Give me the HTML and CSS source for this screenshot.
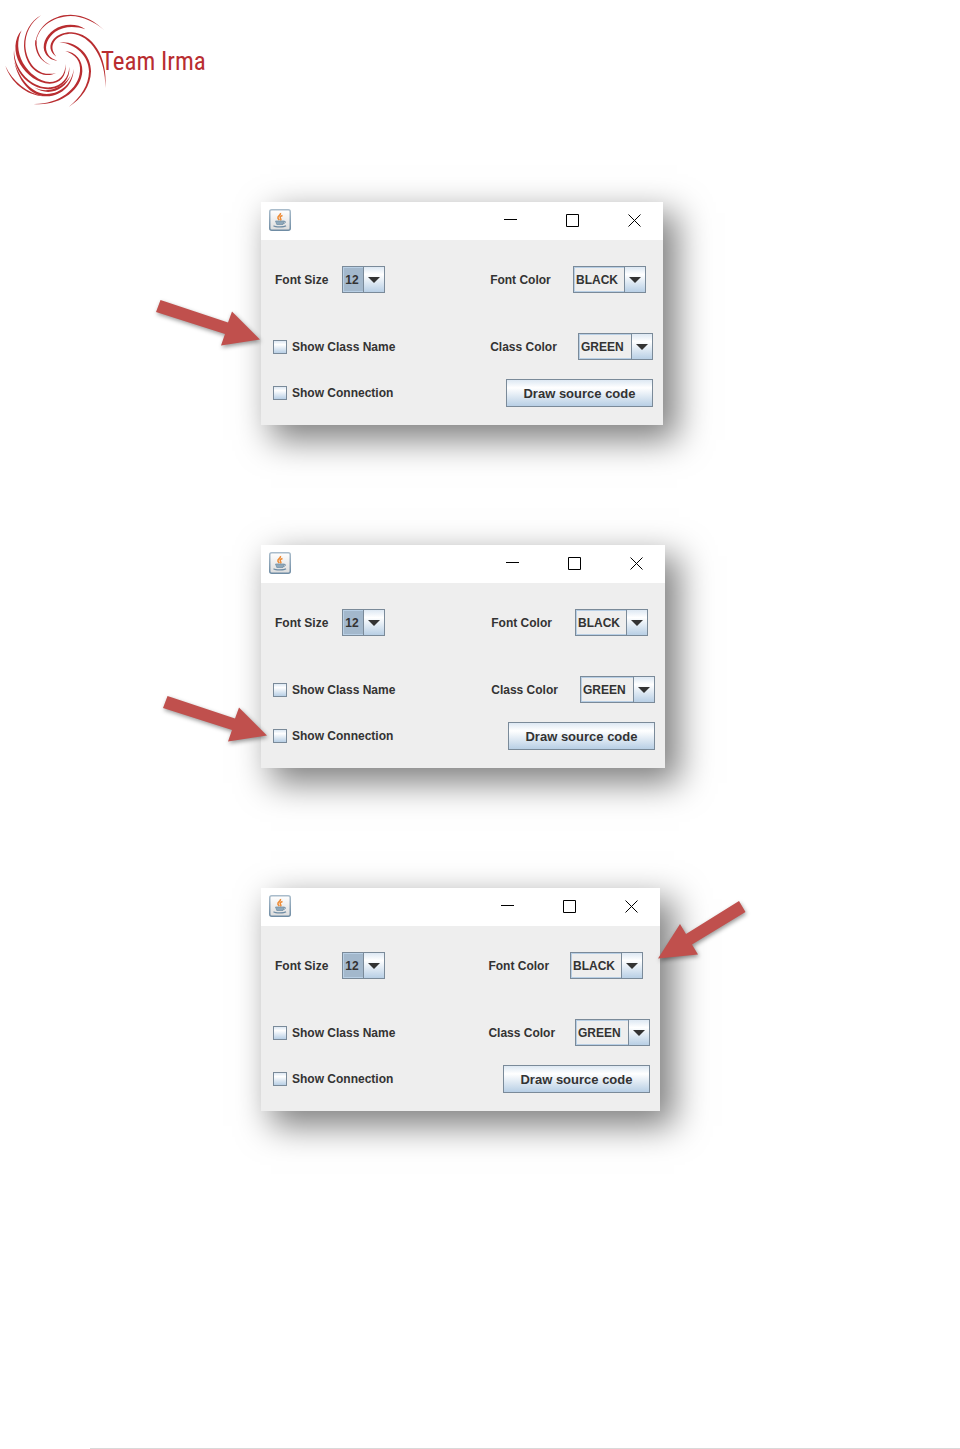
FILE: index.html
```
<!DOCTYPE html>
<html lang="en">
<head>
    <meta charset="UTF-8">
    <meta name="viewport" content="width=device-width, initial-scale=1.0">
    <title>Team Irma</title>
    <link rel="stylesheet" href="styles.css">
</head>
<body>
    <svg class="defs" width="0" height="0" aria-hidden="true">
        <defs>
            <linearGradient id="cupFrame" x1="0" y1="0" x2="0" y2="1">
                <stop offset="0" stop-color="#a9bccb"/>
                <stop offset="1" stop-color="#6f8ca4"/>
            </linearGradient>
            <linearGradient id="cupBack" x1="0" y1="0" x2="0" y2="1">
                <stop offset="0" stop-color="#ffffff"/>
                <stop offset="1" stop-color="#dcdcdc"/>
            </linearGradient>
        </defs>
        <symbol id="java" viewBox="0 0 22 22">
            <rect x="0.75" y="0.75" width="20.5" height="20.5" rx="2" fill="url(#cupBack)" stroke="url(#cupFrame)" stroke-width="1.5"/>
            <path d="M11.5 4c.6 2.2-3 3-2.6 5 .2.9 1 1.4 1.5 2.2M13.5 6.5c-2.4.8-2.8 2-1.8 3.2.5.7.2 1.3-.3 1.8" fill="none" stroke="#ee8b35" stroke-width="1.5"/>
            <path d="M6.5 12h8.500l-1 3.500H7.800z" fill="#8fa8ba" stroke="#6f8ca4" stroke-width=".7"/>
            <path d="M15 12.300c2.300-.3 1.800 1.800-.6 2.200" fill="none" stroke="#6f8ca4"/>
            <path d="M4.500 16.700c2 1.600 10.500 1.600 12.500.1" fill="none" stroke="#6f8ca4" stroke-width="1.200"/>
        </symbol>
        <symbol id="min" viewBox="0 0 13 13"><path d="M0 5.500h13" stroke="#000"/></symbol>
        <symbol id="max" viewBox="0 0 13 13"><path d="M.5.500h12v12H.500z" fill="none" stroke="#000"/></symbol>
        <symbol id="close" viewBox="0 0 13 13"><path d="M.5.500l12 12M12.500.500l-12 12" stroke="#000"/></symbol>
    </svg>

    <header class="header">
        <svg class="logo" viewBox="0 0 330 360" aria-hidden="true">
            <path d="M123 46C90 65 72 98 72 138C74 186 102 222 138 225C150 226 160 223 168 219C158 222 148 222 138 221C106 216 79 184 76 138C75 100 92 68 123 46Z"/>
            <path d="M106 140C105 84 154 44 212 44C252 45 286 64 313 91C284 66 250 49 212 48C157 49 109 86 109 130Z"/>
            <path d="M106 120C103 156 120 185 152 195C124 182 110 158 109 122Z"/>
            <path d="M256 88C232 70 190 70 162 89C135 107 124 138 136 160C144 174 157 182 172 182C158 178 146 170 141 157C133 137 143 112 166 95C190 78 226 77 256 88Z"/>
            <path d="M169 170C148 156 146 134 161 117C174 103 194 96 215 97C277 100 324 170 316 264C318 174 272 105 215 101C196 101 178 107 166 120C153 135 155 153 169 170Z"/>
            <path d="M178 127C228 121 273 162 273 214C272 258 246 296 206 321C242 292 266 257 267 214C266 170 229 132 178 127Z"/>
            <path d="M196 153C228 156 248 181 247 214C244 272 178 320 100 312C174 314 236 268 240 214C243 183 226 163 196 153Z"/>
            <path d="M65 91C42 115 40 158 60 192C80 226 114 250 149 251C180 251 200 230 197 192C196 226 177 246 149 246C117 244 88 220 69 189C51 156 50 120 65 91Z"/>
            <path d="M42 150C38 184 54 220 82 244C104 262 130 270 153 267C188 262 211 237 208 200C206 233 186 257 152 262C130 264 107 257 86 240C59 216 43 186 42 150Z"/>
            <path d="M43 185C54 240 90 288 140 289C188 288 221 251 221 206C217 246 187 280 140 282C97 280 61 241 43 185Z"/>
            <path d="M16 197C32 246 78 286 132 289C82 279 37 244 16 197Z"/>
            <path d="M102 262C146 284 194 260 212 226C196 270 146 292 102 262Z"/>
        </svg>
        <span class="brand">Team Irma</span>
    </header>

    <main class="shots">
        <section class="shot">
            <form class="window">
                <div class="titlebar">
                    <svg class="java"><use href="#java"/></svg>
                    <button type="button" class="win-btn" aria-label="Minimize"><svg><use href="#min"/></svg></button>
                    <button type="button" class="win-btn" aria-label="Maximize"><svg><use href="#max"/></svg></button>
                    <button type="button" class="win-btn" aria-label="Close"><svg><use href="#close"/></svg></button>
                </div>
                <div class="options">
                    <div class="field size">
                        <label for="size1">Font Size</label>
                        <span class="combo picked"><select id="size1"><option>12</option></select></span>
                    </div>
                    <div class="field font-color">
                        <label for="font1">Font Color</label>
                        <span class="combo"><select id="font1"><option>BLACK</option></select></span>
                    </div>
                    <label class="check name"><input type="checkbox">Show Class Name</label>
                    <div class="field class-color">
                        <label for="class1">Class Color</label>
                        <span class="combo wide"><select id="class1"><option>GREEN</option></select></span>
                    </div>
                    <label class="check"><input type="checkbox">Show Connection</label>
                    <button type="button" class="draw">Draw source code</button>
                </div>
            </form>
            <svg class="arrow arrow-name" viewBox="0 0 104 46" aria-hidden="true">
                <path d="M4.500 0L72 22.500L76 11.500L104 39.500L65 45.500L69 34L0 12Z"/>
            </svg>
        </section>

        <section class="shot">
            <form class="window medium">
                <div class="titlebar">
                    <svg class="java"><use href="#java"/></svg>
                    <button type="button" class="win-btn" aria-label="Minimize"><svg><use href="#min"/></svg></button>
                    <button type="button" class="win-btn" aria-label="Maximize"><svg><use href="#max"/></svg></button>
                    <button type="button" class="win-btn" aria-label="Close"><svg><use href="#close"/></svg></button>
                </div>
                <div class="options">
                    <div class="field size">
                        <label for="size2">Font Size</label>
                        <span class="combo picked"><select id="size2"><option>12</option></select></span>
                    </div>
                    <div class="field font-color">
                        <label for="font2">Font Color</label>
                        <span class="combo"><select id="font2"><option>BLACK</option></select></span>
                    </div>
                    <label class="check name"><input type="checkbox">Show Class Name</label>
                    <div class="field class-color">
                        <label for="class2">Class Color</label>
                        <span class="combo wide"><select id="class2"><option>GREEN</option></select></span>
                    </div>
                    <label class="check"><input type="checkbox">Show Connection</label>
                    <button type="button" class="draw">Draw source code</button>
                </div>
            </form>
            <svg class="arrow arrow-connection" viewBox="0 0 104 46" aria-hidden="true">
                <path d="M4.500 0L72 22.500L76 11.500L104 39.500L65 45.500L69 34L0 12Z"/>
            </svg>
        </section>

        <section class="shot">
            <form class="window small">
                <div class="titlebar">
                    <svg class="java"><use href="#java"/></svg>
                    <button type="button" class="win-btn" aria-label="Minimize"><svg><use href="#min"/></svg></button>
                    <button type="button" class="win-btn" aria-label="Maximize"><svg><use href="#max"/></svg></button>
                    <button type="button" class="win-btn" aria-label="Close"><svg><use href="#close"/></svg></button>
                </div>
                <div class="options">
                    <div class="field size">
                        <label for="size3">Font Size</label>
                        <span class="combo picked"><select id="size3"><option>12</option></select></span>
                    </div>
                    <div class="field font-color">
                        <label for="font3">Font Color</label>
                        <span class="combo"><select id="font3"><option>BLACK</option></select></span>
                    </div>
                    <label class="check name"><input type="checkbox">Show Class Name</label>
                    <div class="field class-color">
                        <label for="class3">Class Color</label>
                        <span class="combo wide"><select id="class3"><option>GREEN</option></select></span>
                    </div>
                    <label class="check"><input type="checkbox">Show Connection</label>
                    <button type="button" class="draw">Draw source code</button>
                </div>
            </form>
            <svg class="arrow arrow-color" viewBox="0 0 88 58" aria-hidden="true">
                <path d="M81 0L87.500 11L34 43.500L40 53.500L0 57.500L22 23L28 33Z"/>
            </svg>
        </section>
    </main>

    <footer class="footer"></footer>
</body>
</html>
```
FILE: styles.css
```
* {
    box-sizing: border-box;
}
body {
    font-family: "Liberation Sans", Arial, sans-serif;
    font-size: 12px;
    font-weight: bold;
    margin: 0;
    min-height: 100vh;
    display: flex;
    flex-direction: column;
    background-color: #fff;
    color: #333;
}
.defs {
    position: absolute;
}
.header {
    display: flex;
    align-items: flex-start;
    height: 122px;
}
.logo {
    width: 110px;
    height: 120px;
    margin-right: -9px;
    fill: #b92d30;
}
.brand {
    font-family: "Roboto Condensed", Roboto, sans-serif;
    font-size: 25px;
    font-weight: normal;
    line-height: 124px;
    color: #b92d30;
}
.shots {
    display: flex;
    flex-direction: column;
    gap: 120px;
    padding: 80px 20px 80px 261px;
}
.shot {
    position: relative;
}
.window {
    max-width: 402px;
    background-color: #eee;
    box-shadow: 12px 13px 32px 2px rgba(0, 0, 0, 0.5);
}
.window.medium {
    max-width: 404px;
}
.window.small {
    max-width: 399px;
}
.titlebar {
    display: flex;
    align-items: center;
    height: 38px;
    padding: 0 13px 2px 8px;
    background-color: #fff;
}
.java {
    width: 22px;
    height: 22px;
    margin-right: auto;
}
.win-btn {
    display: flex;
    justify-content: center;
    width: 32px;
    margin-left: 30px;
    padding: 0;
    border: none;
    background: none;
}
.win-btn svg {
    width: 13px;
    height: 13px;
}
.options {
    display: grid;
    grid-template-columns: 57% 43%;
    align-items: center;
    padding: 26px 0 18px;
}
.field {
    display: flex;
    align-items: center;
}
.size {
    gap: 14px;
    padding-left: 14px;
}
.font-color, .class-color {
    justify-content: space-between;
    padding-right: 10px;
}
.font-color {
    padding-right: 17px;
}
.class-color, .check.name {
    margin: 40px 0 19px;
}
.combo {
    position: relative;
    width: 73px;
    height: 27px;
}
.combo.wide {
    width: 75px;
}
.combo.picked {
    width: 43px;
}
.combo select {
    appearance: none;
    width: 100%;
    height: 100%;
    padding: 0 0 0 2px;
    border: 1px solid #7a8a99;
    border-radius: 0;
    box-shadow: inset 1px 1px #b8cfe5, inset 0 -1px #b8cfe5;
    background-color: #eee;
    font: inherit;
    color: #333;
}
.combo.picked select {
    background-color: #a3b8cc;
}
.combo::before {
    content: "";
    position: absolute;
    top: 1px;
    right: 1px;
    bottom: 1px;
    width: 20px;
    border-left: 1px solid #7a8a99;
    background: linear-gradient(#dde8f3, #fff 30%, #b8cfe5);
    pointer-events: none;
}
.combo::after {
    content: "";
    position: absolute;
    top: 11px;
    right: 5px;
    border: 6px solid transparent;
    border-top-color: #333;
    border-bottom-width: 0;
    pointer-events: none;
}
.check {
    display: flex;
    align-items: center;
    gap: 5px;
    padding-left: 12px;
}
.check input {
    appearance: none;
    width: 14px;
    height: 14px;
    margin: 0;
    border: 1px solid #7a8a99;
    background: linear-gradient(#dde8f3, #fff 30%, #b8cfe5);
}
.draw {
    justify-self: end;
    width: 147px;
    height: 28px;
    margin-right: 10px;
    padding: 0;
    border: 1px solid #7a8a99;
    background: linear-gradient(#dde8f3, #fff 30%, #b8cfe5);
    font: inherit;
    font-size: 13px;
    color: #333;
}
/* callout arrows lie over the windows */
.arrow {
    position: absolute;
    overflow: visible;
    fill: #c0504d;
    filter: drop-shadow(1px 2px 2px rgba(0, 0, 0, 0.4));
}
.arrow-name {
    top: 98px;
    left: -105px;
    width: 104px;
}
.arrow-connection {
    top: 151px;
    left: -98px;
    width: 104px;
}
.arrow-color {
    top: 13px;
    left: 397px;
    width: 88px;
}
.footer {
    margin-top: auto;
    margin-left: 90px;
    border-top: 1px solid #d9d9d9;
}
```
